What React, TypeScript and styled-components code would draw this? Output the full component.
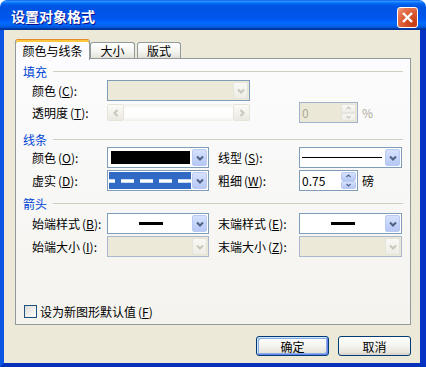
import React from "react"
import styled, { createGlobalStyle } from "styled-components"

const GlobalStyle = createGlobalStyle`
  html, body { margin: 0; padding: 0; background: #ffffff; }
  body {
    font-family: "Noto Sans CJK SC", "Liberation Sans", sans-serif;
    font-size: 12px;
    color: #000;
  }
`

type Dir = "down" | "up" | "left" | "right"

const chevronPoints: Record<Dir, string> = {
  down: "1,1.5 4,4.5 7,1.5",
  up: "1,4.5 4,1.5 7,4.5",
  left: "4.5,1 1.5,4 4.5,7",
  right: "1.5,1 4.5,4 1.5,7",
}

const Chevron = ({ dir = "down", color, small }: { dir?: Dir; color: string; small?: boolean }) => {
  const flat = dir === "down" || dir === "up"
  const w = flat ? 8 : 6
  const h = flat ? 6 : 8
  return (
    <svg width={small ? w - 1 : w} height={small ? h - 2 : h} viewBox={`0 0 ${w} ${h}`}>
      <polyline points={chevronPoints[dir]} fill="none" stroke={color} strokeWidth={small ? 1.6 : 2} />
    </svg>
  )
}

const Mnemonic = ({ k }: { k: string }) => (
  <Paren>
    (<u>{k}</u>)
  </Paren>
)

const App = () => {
  return (
    <>
      <GlobalStyle />
      <Window>
        <TitleBar>
          <TitleText>设置对象格式</TitleText>
          <CloseButton>
            <svg width="13" height="13" viewBox="0 0 13 13">
              <line x1="2" y1="2" x2="11" y2="11" stroke="#fff" strokeWidth="2.4" />
              <line x1="11" y1="2" x2="2" y2="11" stroke="#fff" strokeWidth="2.4" />
            </svg>
          </CloseButton>
        </TitleBar>

        <Frame>
          <TabStrip>
            <Tab $active $w={75}>颜色与线条</Tab>
            <Tab $w={45}>大小</Tab>
            <Tab $w={44} $gap={2}>版式</Tab>
          </TabStrip>

          <Panel>
            <SectionHeader $mt={5}>填充</SectionHeader>
            <Row $mt={2}>
              <Label>颜色<Mnemonic k="C" />:</Label>
              <Combo $w={143} $disabled>
                <ComboBody />
                <DropButton $disabled>
                  <Chevron color="#C9C7BA" />
                </DropButton>
              </Combo>
            </Row>
            <Row $mt={1}>
              <Label>透明度<Mnemonic k="T" />:</Label>
              <Slider>
                <ScrollArrow>
                  <Chevron dir="left" color="#C9C7BA" />
                </ScrollArrow>
                <Track />
                <ScrollArrow>
                  <Chevron dir="right" color="#C9C7BA" />
                </ScrollArrow>
              </Slider>
              <SpinGroup>
                <Spin $disabled>
                  <SpinText $disabled>0</SpinText>
                  <SpinButtons>
                    <SpinHalf $disabled><Chevron dir="up" color="#C9C7BA" small /></SpinHalf>
                    <SpinHalf $disabled><Chevron dir="down" color="#C9C7BA" small /></SpinHalf>
                  </SpinButtons>
                </Spin>
                <Unit $muted>%</Unit>
              </SpinGroup>
            </Row>

            <SectionHeader $mt={9}>线条</SectionHeader>
            <Row $mt={1}>
              <Label>颜色<Mnemonic k="O" />:</Label>
              <Combo $w={102}>
                <ComboBody>
                  <Swatch />
                </ComboBody>
                <DropButton>
                  <Chevron color="#4D6185" />
                </DropButton>
              </Combo>
              <RightGroup>
                <Label $w={81}>线型<Mnemonic k="S" />:</Label>
                <Combo $w={103}>
                  <ComboBody>
                    <LineSample />
                  </ComboBody>
                  <DropButton>
                    <Chevron color="#4D6185" />
                  </DropButton>
                </Combo>
              </RightGroup>
            </Row>
            <Row $mt={2}>
              <Label>虚实<Mnemonic k="D" />:</Label>
              <Combo $w={102}>
                <ComboBody>
                  <DashFill>
                    <svg width="100%" height="17" preserveAspectRatio="none">
                      <line x1="-7" y1="9" x2="100" y2="9" stroke="#fff" strokeWidth="3.5" strokeDasharray="13 6" />
                    </svg>
                  </DashFill>
                </ComboBody>
                <DropButton>
                  <Chevron color="#4D6185" />
                </DropButton>
              </Combo>
              <RightGroup>
                <Label $w={81}>粗细<Mnemonic k="W" />:</Label>
                <Spin>
                  <SpinText>0.75</SpinText>
                  <SpinButtons>
                    <SpinHalf><Chevron dir="up" color="#4D6185" small /></SpinHalf>
                    <SpinHalf><Chevron dir="down" color="#4D6185" small /></SpinHalf>
                  </SpinButtons>
                </Spin>
                <Unit>磅</Unit>
              </RightGroup>
            </Row>

            <SectionHeader $mt={5}>箭头</SectionHeader>
            <Row $mt={3}>
              <Label>始端样式<Mnemonic k="B" />:</Label>
              <Combo $w={102}>
                <ComboBody>
                  <ArrowSample />
                </ComboBody>
                <DropButton>
                  <Chevron color="#4D6185" />
                </DropButton>
              </Combo>
              <RightGroup>
                <Label $w={81}>末端样式<Mnemonic k="E" />:</Label>
                <Combo $w={103}>
                  <ComboBody>
                    <ArrowSample />
                  </ComboBody>
                  <DropButton>
                    <Chevron color="#4D6185" />
                  </DropButton>
                </Combo>
              </RightGroup>
            </Row>
            <Row $mt={2}>
              <Label>始端大小<Mnemonic k="I" />:</Label>
              <Combo $w={102} $disabled $pale>
                <ComboBody />
                <DropButton $disabled>
                  <Chevron color="#C9C7BA" />
                </DropButton>
              </Combo>
              <RightGroup>
                <Label $w={81}>末端大小<Mnemonic k="Z" />:</Label>
                <Combo $w={103} $disabled $pale>
                  <ComboBody />
                  <DropButton $disabled>
                    <Chevron color="#C9C7BA" />
                  </DropButton>
                </Combo>
              </RightGroup>
            </Row>

            <CheckRow>
              <CheckBox />
              <span>设为新图形默认值<Mnemonic k="F" /></span>
            </CheckRow>
          </Panel>

          <ButtonRow>
            <PushButton $default>确定</PushButton>
            <PushButton>取消</PushButton>
          </ButtonRow>
        </Frame>
      </Window>
    </>
  )
}
export default App

const Window = styled.div`
width: 426px;
height: 367px;
display: flex;
flex-direction: column;
`

const TitleBar = styled.div`
height: 30px;
flex-shrink: 0;
display: flex;
align-items: flex-start;
justify-content: space-between;
padding: 0 8px 0 11px;
border-radius: 7px 7px 0 0;
background: linear-gradient(
  to bottom,
  #0058ee 0%, #3593ff 4%, #288eff 6%, #127dff 8%, #036ffc 10%, #0262ee 14%,
  #0057e5 20%, #0054e3 24%, #0055eb 56%, #005bf5 66%, #026afe 76%,
  #0062ef 86%, #0052d6 92%, #0040ab 94%, #003092 100%
);
`

const TitleText = styled.div`
color: #fff;
font-weight: bold;
font-size: 14px;
line-height: 30px;
padding-top: 1px;
text-shadow: 1px 1px #0f1089;
`

const CloseButton = styled.div`
width: 21px;
height: 21px;
margin-top: 7px;
box-sizing: border-box;
border: 1px solid #fff;
border-radius: 3px;
display: flex;
align-items: center;
justify-content: center;
background: radial-gradient(circle at 85% 85%, #c23a12 0%, #d9562e 45%, #e6744f 75%, #f3a88c 100%);
`

const Frame = styled.div`
flex: 1;
display: flex;
flex-direction: column;
box-sizing: border-box;
background: #ece9d8;
border-style: solid;
border-width: 0 6px 4px 4px;
border-color: #0841d6 #0733c4 #0530b8 #0a55e2;
padding: 9px 9px 7px 11px;
`

const TabStrip = styled.div`
height: 19px;
display: flex;
align-items: flex-end;
`

const Tab = styled.div<{ $active?: boolean; $w: number; $gap?: number }>`
position: relative;
z-index: ${p => (p.$active ? 1 : 0)};
width: ${p => p.$w}px;
height: ${p => (p.$active ? 21 : 16)}px;
margin-left: ${p => p.$gap || 0}px;
margin-bottom: ${p => (p.$active ? -2 : 0)}px;
box-sizing: border-box;
border: 1px solid #919b9c;
border-bottom: none;
border-top-color: ${p => (p.$active ? "#e68b2c" : "#919b9c")};
border-radius: 3px 3px 0 0;
display: flex;
align-items: center;
justify-content: center;
padding-top: ${p => (p.$active ? 1 : 0)}px;
background: ${p => (p.$active ? "#fcfcfe" : "linear-gradient(#ffffff, #f3f3ef 60%, #e3e1d8)")};
box-shadow: ${p => (p.$active ? "inset 0 2px 0 #ffc83c" : "none")};
`

const Panel = styled.div`
height: 267px;
box-sizing: border-box;
border: 1px solid #919b9c;
background: linear-gradient(#fcfcfe, #f4f3ee);
display: flex;
flex-direction: column;
padding-bottom: 6px;
`

const SectionHeader = styled.div<{ $mt: number }>`
height: 14px;
margin-top: ${p => p.$mt}px;
padding: 0 7px;
display: flex;
align-items: center;
color: #0046d5;
&::after {
  content: "";
  flex: 1;
  height: 1px;
  margin-left: 6px;
  background: #d0d0bf;
}
`

const Row = styled.div<{ $mt?: number }>`
height: 21px;
margin-top: ${p => p.$mt || 0}px;
padding: 0 8px 0 16px;
display: flex;
align-items: center;
`

const Label = styled.div<{ $w?: number }>`
width: ${p => p.$w || 75}px;
flex-shrink: 0;
white-space: nowrap;
`

const Paren = styled.span`
margin-left: 2px;
`

const RightGroup = styled.div`
margin-left: auto;
width: 184px;
flex-shrink: 0;
display: flex;
align-items: center;
`

const SpinGroup = styled.div`
margin-left: auto;
width: 103px;
flex-shrink: 0;
display: flex;
align-items: center;
`

const Combo = styled.div<{ $w: number; $disabled?: boolean; $pale?: boolean }>`
width: ${p => p.$w}px;
height: 21px;
flex-shrink: 0;
box-sizing: border-box;
border: 1px solid ${p => (p.$pale ? "#a9b8cc" : "#7f9db9")};
background: ${p => (p.$disabled ? "#ece9d8" : "#ffffff")};
padding: 1px;
display: flex;
`

const ComboBody = styled.div`
flex: 1;
display: flex;
align-items: center;
justify-content: center;
`

const DropButton = styled.div<{ $disabled?: boolean }>`
width: 15px;
flex-shrink: 0;
box-sizing: border-box;
border-radius: 2px;
border: 1px solid ${p => (p.$disabled ? "#e6e4da" : "#b9caf2")};
background: ${p => (p.$disabled ? "linear-gradient(#f8f8f5, #eeede6)" : "linear-gradient(#d6e1fc, #b6c8f5)")};
display: flex;
align-items: center;
justify-content: center;
`

const Swatch = styled.div`
align-self: stretch;
flex: 1;
margin: 2px;
background: #000;
`

const DashFill = styled.div`
align-self: stretch;
flex: 1;
margin-right: 1px;
background: #316ac5;
display: flex;
align-items: center;
overflow: hidden;
`

const LineSample = styled.div`
flex: 1;
height: 1px;
margin: 0 3px 0 1px;
background: #000;
`

const ArrowSample = styled.div`
width: 24px;
height: 3px;
background: #000;
`

const Slider = styled.div`
width: 143px;
height: 17px;
flex-shrink: 0;
display: flex;
`

const ScrollArrow = styled.div`
width: 17px;
height: 17px;
box-sizing: border-box;
border: 1px solid #e6e4da;
border-radius: 2px;
background: linear-gradient(#fbfbf8, #ebe9e1);
display: flex;
align-items: center;
justify-content: center;
`

const Track = styled.div`
flex: 1;
background: linear-gradient(#f1f0e9, #fefefd 25%, #fefefd 75%, #efeee7);
`

const Spin = styled.div<{ $disabled?: boolean }>`
width: 59px;
height: 21px;
flex-shrink: 0;
box-sizing: border-box;
border: 1px solid ${p => (p.$disabled ? "#9fb2c9" : "#7f9db9")};
background: ${p => (p.$disabled ? "#ebe8d7" : "#ffffff")};
padding: 1px;
display: flex;
`

const SpinText = styled.div<{ $disabled?: boolean }>`
flex: 1;
display: flex;
align-items: center;
padding-left: 1px;
color: ${p => (p.$disabled ? "#aca899" : "#000")};
`

const SpinButtons = styled.div`
width: 15px;
display: flex;
flex-direction: column;
`

const SpinHalf = styled.div<{ $disabled?: boolean }>`
flex: 1;
box-sizing: border-box;
border-radius: 2px;
border: 1px solid ${p => (p.$disabled ? "#e6e4da" : "#b9caf2")};
background: ${p => (p.$disabled ? "linear-gradient(#f8f8f5, #eeede6)" : "linear-gradient(#d6e1fc, #b6c8f5)")};
display: flex;
align-items: center;
justify-content: center;
`

const Unit = styled.span<{ $muted?: boolean }>`
margin-left: 4px;
color: ${p => (p.$muted ? "#aca899" : "#000")};
`

const CheckRow = styled.div`
margin-top: auto;
padding-left: 8px;
height: 13px;
display: flex;
align-items: center;
`

const CheckBox = styled.div`
width: 13px;
height: 13px;
box-sizing: border-box;
border: 1px solid #1c5180;
background: linear-gradient(135deg, #dcdbd5, #ffffff);
margin-right: 3px;
`

const ButtonRow = styled.div`
margin-top: 11px;
display: flex;
justify-content: flex-end;
gap: 9px;
`

const PushButton = styled.div<{ $default?: boolean }>`
width: 73px;
height: 20px;
box-sizing: border-box;
border: 1px solid #003c74;
border-radius: 3px;
background: linear-gradient(#ffffff, #f4f4f0 50%, #e6e4dc 85%, #d6d0c5);
display: flex;
align-items: center;
justify-content: center;
box-shadow: ${p =>
  p.$default
    ? "inset -1px -1px #6982ee, inset 1px 1px #cee7ff, inset -2px -2px #89ade4, inset 2px 2px #89ade4"
    : "none"};
`
